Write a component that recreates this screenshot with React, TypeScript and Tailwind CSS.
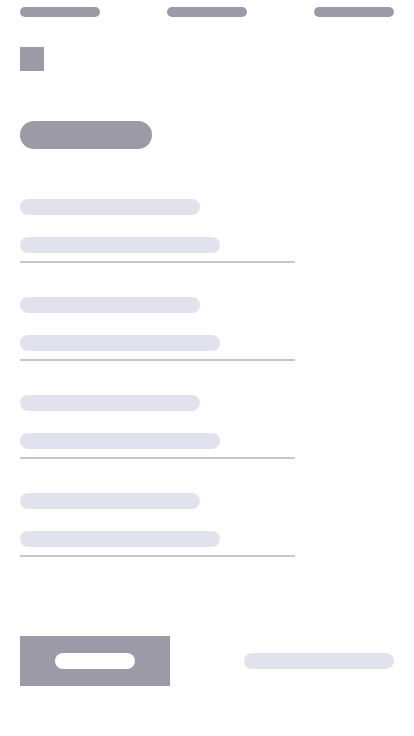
export default function App() {
  const rows = [0, 1, 2, 3];
  return (
    <div className="w-[414px] h-[736px] bg-white overflow-hidden">
      {/* Top tabs */}
      <div className="flex justify-between px-5 pt-[7px]">
        <div className="w-20 h-[10px] rounded-full bg-[#9b9aa6]" />
        <div className="w-20 h-[10px] rounded-full bg-[#9b9aa6]" />
        <div className="w-20 h-[10px] rounded-full bg-[#9b9aa6]" />
      </div>

      {/* Icon + title */}
      <div className="px-5">
        <div className="mt-[30px] w-6 h-6 bg-[#9b9aa6]" />
        <div className="mt-[50px] w-[132px] h-7 rounded-full bg-[#9b9aa6]" />
      </div>

      {/* Fields */}
      <div className="mt-[50px] px-5 flex flex-col gap-[34px]">
        {rows.map((r) => (
          <div key={r} className="w-[275px]">
            <div className="w-[180px] h-4 rounded-full bg-[#e2e1ee]" />
            <div className="mt-[22px] w-[200px] h-4 rounded-full bg-[#e2e1ee]" />
            <div className="mt-2 h-[2px] bg-[#c6c6cb]" />
          </div>
        ))}
      </div>

      {/* Footer actions */}
      <div className="mt-[79px] px-5 flex items-center justify-between">
        <div className="w-[150px] h-[50px] bg-[#9b9aa6] flex items-center justify-center">
          <div className="w-20 h-4 rounded-full bg-white" />
        </div>
        <div className="w-[150px] h-4 rounded-full bg-[#e2e1ee]" />
      </div>
    </div>
  );
}
